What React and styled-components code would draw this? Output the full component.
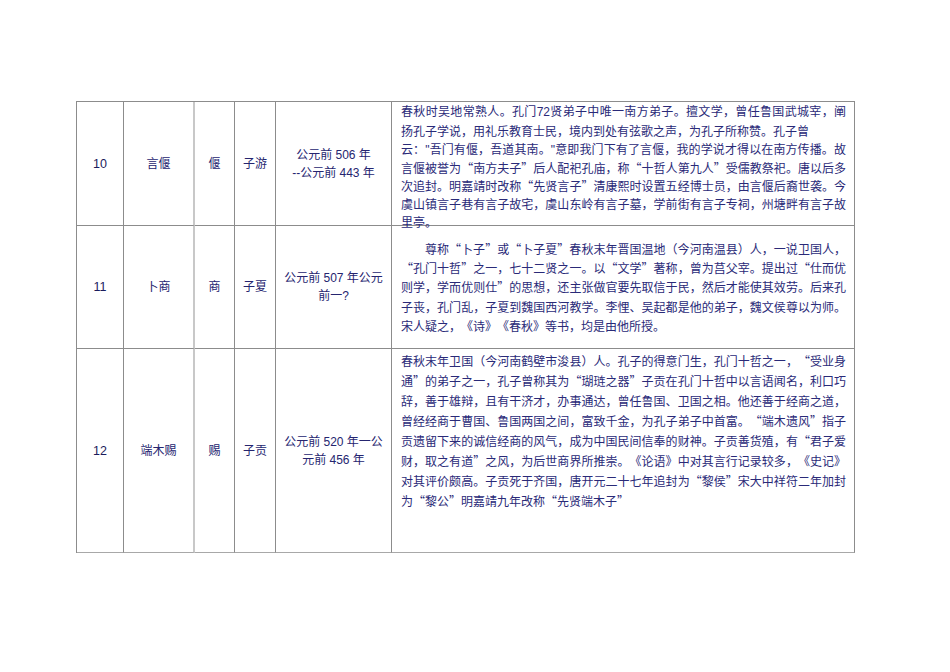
import React from "react"
import styled, { createGlobalStyle } from "styled-components"

const Global = createGlobalStyle`
  body {
    margin: 0;
    background: #fff;
  }
`

const Sheet = styled.div`
  padding: 101px 0 0 76px;
`

const Table = styled.div`
  display: grid;
  grid-template-columns: 47px 71px 40px 41px 116px 463px;
  width: max-content;
  border-top: 1px solid #8c8c8c;
  border-left: 1px solid #8c8c8c;
`

const Cell = styled.div`
  box-sizing: border-box;
  height: ${(p) => p.$h}px;
  border-right: ${(p) => (p.$soft ? "2px solid #c8c8c8" : "1px solid #8c8c8c")};
  border-bottom: 1px solid ${(p) => (p.$last ? "#a8a8a8" : "#8c8c8c")};
  display: flex;
  align-items: center;
  justify-content: center;
  text-align: center;
  font-family: "Liberation Sans", "Noto Sans CJK SC", sans-serif;
  font-size: 12px;
  line-height: 18px;
  color: #25256f;
`

const Num = styled.span`
  color: #1b1b5c;
  font-size: 12.5px;
`

const DescCell = styled(Cell)`
  align-items: ${(p) => p.$valign};
  justify-content: flex-start;
  padding: ${(p) => p.$pad}px 8px 0 9px;
  font-family: "Noto Sans CJK SC", "Liberation Sans", sans-serif;
  font-feature-settings: "fwid" 1;
  text-spacing-trim: space-all;
  color: #2a2a78;
`

const Para = styled.div`
  width: 100%;
  line-height: ${(p) => p.$lh}px;
`

// one printed line of the source document, stretched to the column edge
const Line = styled.span`
  display: block;
  white-space: nowrap;
  text-align: ${(p) => (p.$short ? "left" : "justify")};
  text-align-last: ${(p) => (p.$short ? "left" : "justify")};
  text-indent: ${(p) => (p.$indent ? "2em" : "0")};
`

// digits and straight quotes stay in the narrow latin face
const Latin = styled.span`
  font-family: "Liberation Sans", sans-serif;
  font-feature-settings: normal;
`

const withLatin = (text) =>
  text.split(/([0-9"]+)/).map((part, i) =>
    i % 2 ? <Latin key={i}>{part}</Latin> : part
  )

const rows = [
  {
    no: "10",
    name: "言偃",
    ming: "偃",
    zi: "子游",
    date: ["公元前 506 年", "--公元前 443 年"],
    h: 124,
    valign: "flex-start",
    pad: 0,
    lh: 17.8,
    short: [1, 6],
    lines: [
      "春秋时吴地常熟人。孔门72贤弟子中唯一南方弟子。擅文学，曾任鲁国武城宰，阐",
      "扬孔子学说，用礼乐教育士民，境内到处有弦歌之声，为孔子所称赞。孔子曾",
      "云：\"吾门有偃，吾道其南。\"意即我门下有了言偃，我的学说才得以在南方传播。故",
      "言偃被誉为“南方夫子”后人配祀孔庙，称“十哲人第九人”受儒教祭祀。唐以后多",
      "次追封。明嘉靖时改称“先贤言子”清康熙时设置五经博士员，由言偃后裔世袭。今",
      "虞山镇言子巷有言子故宅，虞山东岭有言子墓，学前街有言子专祠，州塘畔有言子故",
      "里亭。",
    ],
  },
  {
    no: "11",
    name: "卜商",
    ming: "商",
    zi: "子夏",
    date: ["公元前 507 年公元", "前一?"],
    h: 123,
    valign: "center",
    pad: 0,
    lh: 19.3,
    indent: true,
    short: [4],
    lines: [
      "尊称“卜子”或“卜子夏”春秋末年晋国温地（今河南温县）人，一说卫国人，",
      "“孔门十哲”之一，七十二贤之一。以“文学”著称，曾为莒父宰。提出过“仕而优",
      "则学，学而优则仕”的思想，还主张做官要先取信于民，然后才能使其效劳。后来孔",
      "子丧，孔门乱，子夏到魏国西河教学。李悝、吴起都是他的弟子，魏文侯尊以为师。",
      "宋人疑之，《诗》《春秋》等书，均是由他所授。",
    ],
  },
  {
    no: "12",
    name: "端木赐",
    ming: "赐",
    zi: "子贡",
    date: ["公元前 520 年一公", "元前 456 年"],
    h: 204,
    valign: "flex-start",
    pad: 2,
    lh: 20,
    last: true,
    short: [7],
    lines: [
      "春秋末年卫国（今河南鹤壁市浚县）人。孔子的得意门生，孔门十哲之一，“受业身",
      "通”的弟子之一，孔子曾称其为“瑚琏之器”子贡在孔门十哲中以言语闻名，利口巧",
      "辞，善于雄辩，且有干济才，办事通达，曾任鲁国、卫国之相。他还善于经商之道，",
      "曾经经商于曹国、鲁国两国之间，富致千金，为孔子弟子中首富。“端木遗风”指子",
      "贡遗留下来的诚信经商的风气，成为中国民间信奉的财神。子贡善货殖，有“君子爱",
      "财，取之有道”之风，为后世商界所推崇。《论语》中对其言行记录较多，《史记》",
      "对其评价颇高。子贡死于齐国，唐开元二十七年追封为“黎侯”宋大中祥符二年加封",
      "为“黎公”明嘉靖九年改称“先贤端木子”",
    ],
  },
]

const App = () => (
  <Sheet>
    <Global />
    <Table>
      {rows.map((r) => (
        <React.Fragment key={r.no}>
          <Cell $h={r.h} $last={r.last}>
            <Num>{r.no}</Num>
          </Cell>
          <Cell $h={r.h} $last={r.last} $soft>
            {r.name}
          </Cell>
          <Cell $h={r.h} $last={r.last}>
            {r.ming}
          </Cell>
          <Cell $h={r.h} $last={r.last}>
            {r.zi}
          </Cell>
          <Cell $h={r.h} $last={r.last}>
            <div>
              {r.date[0]}
              <br />
              {r.date[1]}
            </div>
          </Cell>
          <DescCell $h={r.h} $last={r.last} $valign={r.valign} $pad={r.pad}>
            <Para $lh={r.lh}>
              {r.lines.map((line, i) => (
                <Line
                  key={i}
                  $short={r.short.includes(i)}
                  $indent={r.indent && i === 0}
                >
                  {withLatin(line)}
                </Line>
              ))}
            </Para>
          </DescCell>
        </React.Fragment>
      ))}
    </Table>
  </Sheet>
)

export default App
